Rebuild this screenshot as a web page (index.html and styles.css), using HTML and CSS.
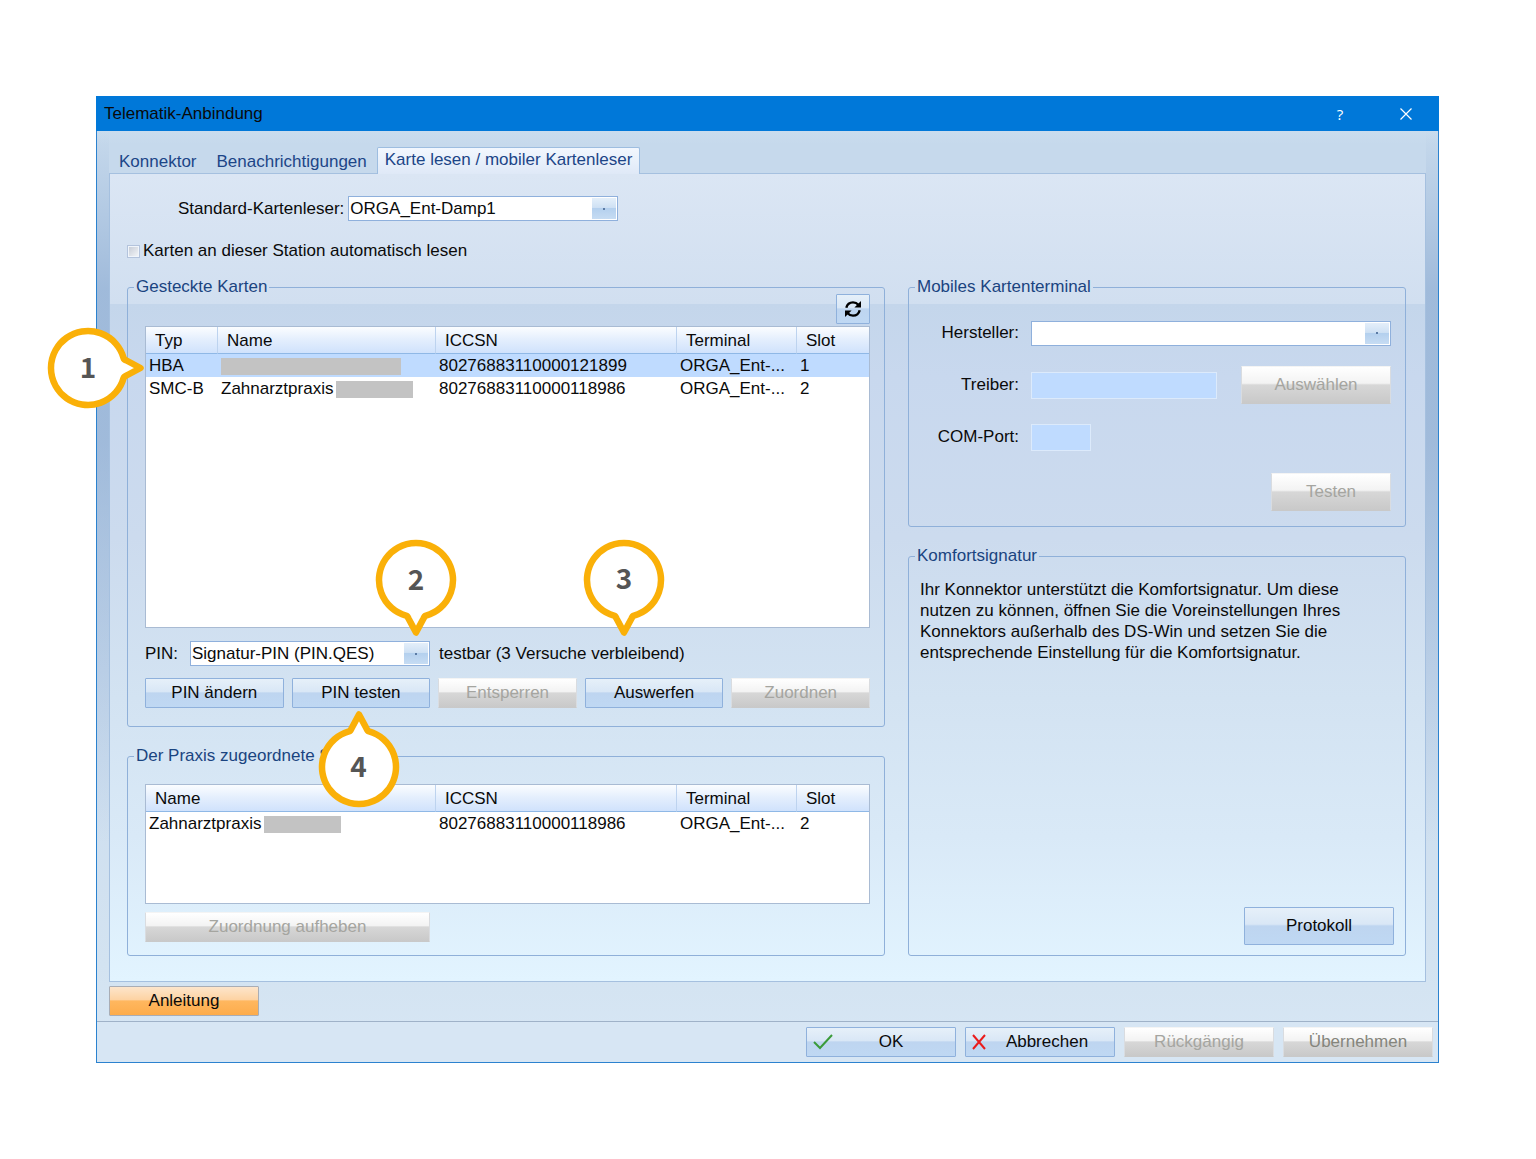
FILE: index.html
```html
<!DOCTYPE html>
<html lang="de">
<head>
    <meta charset="UTF-8">
    <meta name="viewport" content="width=device-width, initial-scale=1.0">
    <title>Telematik-Anbindung</title>
    <link rel="stylesheet" href="styles.css">
</head>
<body>
    <svg class="symbols" aria-hidden="true">
        <symbol id="bubble" viewBox="-56 -56 112 112">
            <path d="M-10 35.6 A37 37 0 1 1 10 35.6 Q8.5 36 7.5 38.5 L0 52.5 L-7.5 38.5 Q-8.5 36 -10 35.6 Z" fill="#fff" stroke="#fab008" stroke-width="6.5" stroke-linejoin="round"/>
        </symbol>
    </svg>

    <div class="window">
        <header class="title-bar">
            <h1>Telematik-Anbindung</h1>
            <button class="title-btn" aria-label="Hilfe">?</button>
            <button class="title-btn" aria-label="Schließen">
                <svg width="12" height="12" viewBox="0 0 12 12"><path d="M0.5 0.5 L11.5 11.5 M11.5 0.5 L0.5 11.5" stroke="#fff" stroke-width="1.2"/></svg>
            </button>
        </header>

        <main class="content">
            <div class="tabs" role="tablist">
                <button class="tab" role="tab">Konnektor</button>
                <button class="tab" role="tab">Benachrichtigungen</button>
                <button class="tab active" role="tab" aria-selected="true">Karte lesen / mobiler Kartenleser</button>
            </div>

            <div class="panel" role="tabpanel">
                <div class="reader-row">
                    <label for="reader">Standard-Kartenleser:</label>
                    <select id="reader"><option>ORGA_Ent-Damp1</option></select>
                </div>
                <div class="auto-row">
                    <input type="checkbox" id="auto">
                    <label for="auto">Karten an dieser Station automatisch lesen</label>
                </div>

                <div class="columns">
                    <div class="column">
                        <fieldset class="cards">
                            <legend>Gesteckte Karten</legend>
                            <div class="toolbar">
                                <button class="btn refresh" aria-label="Aktualisieren">
                                    <svg width="18" height="18" viewBox="0 0 18 18" fill="none" stroke="#000" stroke-width="2.4">
                                        <path d="M2.3 7.8 C3.2 4.3 6 2.4 9 2.4 C11.3 2.4 13.1 3.3 14.6 5"/>
                                        <path d="M15.7 10.2 C14.8 13.7 12 15.6 9 15.6 C6.7 15.6 4.9 14.7 3.4 13"/>
                                        <path d="M17 1 V7.6 H10.4 Z M1 17 V10.4 H7.6 Z" fill="#000" stroke="none"/>
                                    </svg>
                                </button>
                            </div>
                            <div class="list list-large">
                                <table>
                                    <thead>
                                        <tr>
                                            <th class="col-type">Typ</th>
                                            <th>Name</th>
                                            <th class="col-iccsn">ICCSN</th>
                                            <th class="col-terminal">Terminal</th>
                                            <th class="col-slot">Slot</th>
                                        </tr>
                                    </thead>
                                    <tbody>
                                        <tr class="selected">
                                            <td>HBA</td>
                                            <td><span class="redacted redacted-long"></span></td>
                                            <td>80276883110000121899</td>
                                            <td>ORGA_Ent-...</td>
                                            <td>1</td>
                                        </tr>
                                        <tr>
                                            <td>SMC-B</td>
                                            <td>Zahnarztpraxis<span class="redacted"></span></td>
                                            <td>80276883110000118986</td>
                                            <td>ORGA_Ent-...</td>
                                            <td>2</td>
                                        </tr>
                                    </tbody>
                                </table>
                                <div class="callout callout-right"><svg><use href="#bubble"/></svg><span>1</span></div>
                            </div>
                            <div class="pin-row">
                                <label for="pin">PIN:</label>
                                <div class="anchor">
                                    <select id="pin"><option>Signatur-PIN (PIN.QES)</option></select>
                                    <div class="callout callout-select"><svg><use href="#bubble"/></svg><span>2</span></div>
                                </div>
                                <div class="anchor">
                                    <output for="pin">testbar (3 Versuche verbleibend)</output>
                                    <div class="callout callout-status"><svg><use href="#bubble"/></svg><span>3</span></div>
                                </div>
                            </div>
                            <div class="actions">
                                <button class="btn">PIN ändern</button>
                                <div class="anchor">
                                    <button class="btn">PIN testen</button>
                                    <div class="callout callout-up"><svg><use href="#bubble"/></svg><span>4</span></div>
                                </div>
                                <button class="btn" disabled>Entsperren</button>
                                <button class="btn">Auswerfen</button>
                                <button class="btn" disabled>Zuordnen</button>
                            </div>
                        </fieldset>

                        <fieldset class="assigned">
                            <legend>Der Praxis zugeordnete S</legend>
                            <div class="list list-small">
                                <table>
                                    <thead>
                                        <tr>
                                            <th>Name</th>
                                            <th class="col-iccsn">ICCSN</th>
                                            <th class="col-terminal">Terminal</th>
                                            <th class="col-slot">Slot</th>
                                        </tr>
                                    </thead>
                                    <tbody>
                                        <tr>
                                            <td>Zahnarztpraxis<span class="redacted"></span></td>
                                            <td>80276883110000118986</td>
                                            <td>ORGA_Ent-...</td>
                                            <td>2</td>
                                        </tr>
                                    </tbody>
                                </table>
                            </div>
                            <button class="btn unassign" disabled>Zuordnung aufheben</button>
                        </fieldset>
                    </div>

                    <div class="column">
                        <fieldset class="terminal">
                            <legend>Mobiles Kartenterminal</legend>
                            <div class="field">
                                <label for="vendor">Hersteller:</label>
                                <select id="vendor"><option></option></select>
                            </div>
                            <div class="field">
                                <label for="driver">Treiber:</label>
                                <input type="text" id="driver" readonly>
                                <button class="btn btn-tall" disabled>Auswählen</button>
                            </div>
                            <div class="field">
                                <label for="port">COM-Port:</label>
                                <input type="text" id="port" class="short" readonly>
                            </div>
                            <div class="test-row">
                                <button class="btn btn-tall test" disabled>Testen</button>
                            </div>
                        </fieldset>

                        <fieldset class="comfort">
                            <legend>Komfortsignatur</legend>
                            <p>Ihr Konnektor unterstützt die Komfortsignatur. Um diese nutzen zu können, öffnen Sie die Voreinstellungen Ihres Konnektors außerhalb des DS-Win und setzen Sie die entsprechende Einstellung für die Komfortsignatur.</p>
                            <button class="btn btn-tall">Protokoll</button>
                        </fieldset>
                    </div>
                </div>
            </div>

            <button class="btn manual">Anleitung</button>
        </main>

        <footer class="footer">
            <button class="btn">
                <svg width="20" height="16" viewBox="0 0 20 16"><path d="M1 8 L7 14 L19 1" fill="none" stroke="#3a9b3a" stroke-width="2"/></svg>
                <span>OK</span>
            </button>
            <button class="btn">
                <svg width="14" height="16" viewBox="0 0 14 16"><path d="M1 1 L13 15 M13 1 L1 15" fill="none" stroke="#ea1c1c" stroke-width="2"/></svg>
                <span>Abbrechen</span>
            </button>
            <button class="btn" disabled>Rückgängig</button>
            <button class="btn dark" disabled>Übernehmen</button>
        </footer>
    </div>
</body>
</html>
```
FILE: styles.css
```css
* {
    box-sizing: border-box;
}
body {
    margin: 0;
    padding: 96px 97px 96px 96px;
    background: #fff;
    font-family: "Liberation Sans", Arial, sans-serif;
    font-size: 17px;
    line-height: 20px;
    color: #0a0a0a;
}
button, input, select {
    font: inherit;
    color: inherit;
}
.symbols {
    position: absolute;
    width: 0;
    height: 0;
}

/* window frame */
.window {
    border: 1px solid #2b82cf;
    border-top: none;
    background: linear-gradient(#d3e5f2, #c6d9ec 5%, #c6d9ec 30%, #cbdcee 60%, #d3e3f1 90%, #d8e7f5);
}
.title-bar {
    display: flex;
    align-items: center;
    height: 35px;
    margin: 0 -1px;
    padding-left: 8px;
    background: #0078d9;
}
.title-bar h1 {
    flex: 1;
    margin: 0;
    font-size: 17px;
    font-weight: normal;
}
.title-btn {
    width: 66px;
    height: 34px;
    padding: 0;
    border: none;
    background: none;
    color: #fff;
    font-family: "Open Sans", sans-serif;
    font-size: 15px;
}
.content {
    padding: 16px 12px 5px;
    background:
        linear-gradient(rgba(134, 166, 207, 0), rgba(134, 166, 207, 0.6) 18%, rgba(134, 166, 207, 0.6) 35%, rgba(134, 166, 207, 0) 80%) left / 12px 100% no-repeat,
        linear-gradient(rgba(134, 166, 207, 0), rgba(134, 166, 207, 0.6) 18%, rgba(134, 166, 207, 0.6) 35%, rgba(134, 166, 207, 0) 80%) right / 12px 100% no-repeat;
}

/* tabs */
.tabs {
    display: flex;
    align-items: flex-end;
}
.tab {
    padding: 2px 9px 0;
    border: 1px solid transparent;
    background: none;
    color: #1c4587;
}
.tab.active {
    height: 27px;
    margin-bottom: -1px;
    padding: 0 7px 2px;
    border-color: #9dbde0;
    border-bottom: none;
    border-radius: 2px 2px 0 0;
    background: linear-gradient(#f2f7fe, #dfe9f7);
    z-index: 1;
}
.panel {
    padding: 22px 19px 25px 17px;
    border: 1px solid #a5c0df;
    background:
        linear-gradient(#dbe6f4, #d1dff0) top / 100% 130px no-repeat,
        linear-gradient(#c4d6eb 16%, #c8d8ee 25%, #ccdbee 45%, #d3e3f2 65%, #d9e9f7 82%, #e2f4ff);
}

/* form rows */
select {
    height: 25px;
    padding: 0 26px 0 1px;
    border: 1px solid #8fb0dc;
    border-radius: 0;
    appearance: none;
    background:
        linear-gradient(#5b7ba5, #5b7ba5) right 12px center / 2px 2px no-repeat,
        linear-gradient(#e4effa, #cfe1f4 45%, #b4d0ee 50%, #c6dcf3) right 1px center / 24px 21px no-repeat,
        #fff;
}
.reader-row {
    display: flex;
    align-items: center;
    gap: 4px;
    padding-left: 51px;
}
.reader-row select {
    width: 270px;
}
.auto-row {
    display: flex;
    align-items: center;
    gap: 3px;
    margin-top: 20px;
}
.auto-row input {
    width: 13px;
    height: 13px;
    margin: 0;
    border: 1px solid #b3c3dc;
    outline: 1px solid #f0f5fb;
    outline-offset: -2px;
    appearance: none;
    background: linear-gradient(135deg, #c3c9d4, #f6f8fa);
}
.auto-row input:checked {
    background: #1c4587;
}
.columns {
    display: grid;
    grid-template-columns: 758fr 498fr;
    gap: 23px;
    margin-top: 16px;
}
.column {
    display: flex;
    flex-direction: column;
    gap: 19px;
    min-width: 0;
}

/* groups */
fieldset {
    min-width: 0;
    margin: 0;
    border: 1px solid #8fb0d9;
    border-radius: 3px;
}
legend {
    padding: 0 2px;
    color: #1a4480;
}
.cards {
    padding: 0 14px 18px 17px;
}
.assigned {
    padding: 18px 14px 13px 17px;
}
.cards legend, .assigned legend {
    margin-left: -11px;
}
.toolbar {
    display: flex;
    justify-content: flex-end;
    margin-top: -3px;
    margin-bottom: 2px;
}
.refresh {
    display: flex;
    align-items: center;
    justify-content: center;
    width: 34px;
}

/* lists */
.list {
    position: relative;
    border: 1px solid #a9bbd3;
    background: #fff;
}
.list-large {
    height: 302px;
}
.list-small {
    height: 120px;
}
table {
    width: 100%;
    border-collapse: separate;
    border-spacing: 0;
    table-layout: fixed;
}
th {
    height: 27px;
    padding: 2px 0 0 9px;
    border-left: 1px solid #bdd3ef;
    border-bottom: 1px solid #8fb8e6;
    background: linear-gradient(#fbfdff, #e3eefd 50%, #d0e2fc);
    font-weight: normal;
    text-align: left;
}
th:first-child {
    border-left: none;
}
td {
    height: 23px;
    padding: 0 0 0 4px;
    white-space: nowrap;
}
td:first-child {
    padding-left: 3px;
}
.selected td {
    background: #bfdbff;
}
.col-type {
    width: 71px;
}
.col-iccsn {
    width: 241px;
}
.col-terminal {
    width: 120px;
}
.col-slot {
    width: 73px;
}
.redacted {
    display: inline-block;
    width: 77px;
    height: 17px;
    margin-left: 3px;
    background: #c3c3c3;
    vertical-align: middle;
}
.redacted-long {
    width: 180px;
    margin-left: 0;
}
.pin-row {
    display: flex;
    align-items: center;
    gap: 9px;
    margin-top: 13px;
}
.pin-row label {
    width: 36px;
}
.pin-row select {
    display: block;
    width: 240px;
}

/* buttons */
.btn {
    height: 30px;
    padding: 0 8px;
    border: 1px solid #8fb1dc;
    border-radius: 1px;
    background: linear-gradient(#e6f0f9, #d9e7f6 45%, #bed5f0 50%, #bfd8f3);
    white-space: nowrap;
}
.btn:disabled {
    border-color: #f4f4f4 #d9dce0 #c9c9c9;
    background: linear-gradient(#fff, #f3f3f3 45%, #d7d7d7 50%, #c9c9c9);
    color: #a5a5a0;
}
.btn.dark:disabled {
    color: #85857c;
}
.btn.refresh {
    padding: 0;
}
.btn-tall {
    width: 150px;
    height: 38px;
}
.actions {
    display: grid;
    grid-template-columns: repeat(5, 1fr);
    gap: 8px;
    margin-top: 12px;
}
.anchor {
    position: relative;
}
.anchor .btn {
    width: 100%;
}
.unassign {
    display: block;
    width: 285px;
    margin-top: 8px;
}

/* right column */
.terminal {
    padding: 17px 14px 15px 8px;
}
.field {
    display: flex;
    align-items: center;
    height: 38px;
    margin-bottom: 14px;
}
.field label {
    width: 102px;
    margin-right: 12px;
    text-align: right;
}
.field select {
    flex: 1;
}
.field input {
    flex: 1;
    min-width: 0;
    height: 27px;
    margin-right: 24px;
    border: 1px solid #dceafb;
    background: #bfdbff;
}
.field input.short {
    flex: none;
    width: 60px;
}
.test-row {
    display: flex;
    justify-content: flex-end;
    padding-top: 3px;
}
.test {
    width: 120px;
}
.terminal legend, .comfort legend {
    margin-left: -2px;
}
.comfort {
    display: flex;
    flex: 1;
    flex-direction: column;
    align-items: flex-end;
    justify-content: space-between;
    padding: 13px 11px 10px 8px;
}
.comfort p {
    align-self: stretch;
    margin: 0;
    padding: 0 40px 0 3px;
    line-height: 21px;
}

/* bottom */
.manual {
    display: block;
    width: 150px;
    margin-top: 4px;
    border-color: #a9adb5;
    background: linear-gradient(#fde5cb, #fdd3a3 45%, #ffb75f 50%, #fdac4b);
}
.footer {
    display: flex;
    justify-content: flex-end;
    gap: 9px;
    padding: 5px;
    border-top: 1px solid #9fb2c8;
    background: #d7e6f4;
}
.footer .btn {
    display: flex;
    align-items: center;
    justify-content: center;
    width: 150px;
    padding: 0 6px;
}
.footer .btn span {
    flex: 1;
}

/* numbered callouts */
.callout {
    position: absolute;
    z-index: 2;
    width: 112px;
    height: 112px;
    display: flex;
    align-items: center;
    justify-content: center;
    pointer-events: none;
}
.callout svg {
    position: absolute;
    width: 112px;
    height: 112px;
}
.callout span {
    position: relative;
    padding-bottom: 5px;
    color: #555;
    font-family: "Noto Sans CJK SC", sans-serif;
    font-size: 28px;
    font-weight: bold;
    line-height: 28px;
}
.callout-right {
    top: -15px;
    left: -114px;
}
.callout-right svg {
    transform: rotate(-90deg);
}
.callout-up svg {
    transform: rotate(180deg);
}
.callout-select {
    right: -42px;
    bottom: 30px;
}
.callout-status {
    bottom: 28px;
    left: 129px;
}
.callout-up {
    top: 33px;
    left: 11px;
}
```
